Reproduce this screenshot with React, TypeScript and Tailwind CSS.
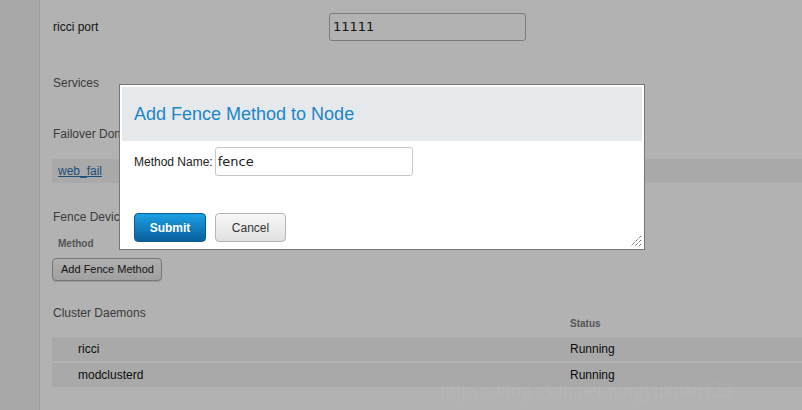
import React from "react";

const rows = [
  { name: "ricci", status: "Running" },
  { name: "modclusterd", status: "Running" },
];

function ResizeGrip() {
  return (
    <svg width="12" height="12" viewBox="0 0 12 12" className="absolute right-[2px] bottom-[2px]">
      <path d="M11 1 L1 11 M11 5 L5 11 M11 9 L9 11" stroke="#333" strokeWidth="1" strokeDasharray="1 1" fill="none" />
    </svg>
  );
}

export default function App() {
  return (
    <div className="relative w-[802px] h-[410px] overflow-hidden bg-white font-['Liberation_Sans',Arial,sans-serif] text-[12px] text-[#222]">
      {/* page under the modal */}
      <div className="flex h-full">
        <div className="w-[40px] shrink-0 bg-[#f1f1f1] border-r border-[#e2e2e2]" />
        <div className="flex-1 pl-[12px] pt-[13px]">
          <div className="flex items-center h-[28px]">
            <div className="w-[277px] pl-[1px]">ricci port</div>
            <div className="w-[197px] h-[28px] rounded-[3px] border border-[#b0b0b0] px-[3px] flex items-center font-['DejaVu_Sans',sans-serif] text-[13px] text-[#222]">
              11111
            </div>
          </div>

          <div className="mt-[34px] h-[16px] leading-[16px] pl-[1px] text-[#555]">Services</div>
          <div className="mt-[35px] h-[16px] leading-[16px] pl-[1px] text-[#555]">Failover Domains</div>

          <div className="mt-[17px] h-[24px] bg-[#f3f3f3] pl-[6px] flex items-center">
            <a className="underline text-[#2a72b0]">web_fail</a>
          </div>

          <div className="mt-[26px] h-[16px] leading-[16px] pl-[1px] text-[#555]">Fence Devices</div>
          <div className="mt-[13px] h-[12px] leading-[12px] pl-[6px] text-[10px] font-bold text-[#7a7a7a]">Method</div>
          <button className="mt-[8px] w-[110px] h-[23px] rounded-[4px] border border-[#a9a9a9] bg-gradient-to-b from-[#fbfbfb] to-[#e6e6e6] pl-[1px] text-[11px] text-[#222] shadow-[0_1px_1px_rgba(0,0,0,0.15)]">
            Add Fence Method
          </button>

          <div className="mt-[26px] h-[12px] leading-[12px] pl-[1px] text-[#555]">Cluster Daemons</div>
          <div className="grid grid-cols-[518px_1fr] h-[10px] leading-[10px] text-[10px] font-bold text-[#7a7a7a]">
            <div />
            <div>Status</div>
          </div>
          <div className="mt-[8px] flex flex-col gap-[2px]">
            {rows.map((r) => (
              <div key={r.name} className="grid grid-cols-[518px_1fr] h-[24px] items-center bg-[#f3f3f3] text-[#111]">
                <div className="pl-[26px]">{r.name}</div>
                <div>{r.status}</div>
              </div>
            ))}
          </div>
        </div>
      </div>

      {/* modal overlay */}
      <div className="absolute inset-0 bg-black/30" />

      {/* dialog */}
      <div className="absolute left-[119px] top-[84px] w-[526px] h-[166px] bg-white border border-[#777] p-[2px]">
        <div className="h-[54px] bg-[#e6e9ec] pl-[12px] flex items-center text-[18px] text-[#1a86c8]">
          Add Fence Method to Node
        </div>
        <div className="pl-[12px] pt-[6px]">
          <div className="flex items-center">
            <span className="text-[12px] text-[#222]">Method Name:</span>
            <div className="ml-[2px] w-[198px] h-[29px] rounded-[3px] border border-[#c8c8c8] px-[2px] flex items-center font-['DejaVu_Sans',sans-serif] text-[13px] text-[#222]">
              fence
            </div>
          </div>
          <div className="mt-[37px] flex gap-[9px]">
            <button className="w-[72px] h-[29px] rounded-[4px] border border-[#0b5b94] bg-gradient-to-b from-[#1ca1e6] to-[#0a5f9e] text-[12px] font-bold text-white">
              Submit
            </button>
            <button className="w-[71px] h-[29px] rounded-[4px] border border-[#b5b5b5] bg-gradient-to-b from-[#f7f7f7] to-[#e1e1e1] text-[12px] text-[#333]">
              Cancel
            </button>
          </div>
        </div>
        <ResizeGrip />
      </div>

      {/* watermark */}
      <div className="absolute left-[440px] top-[382px] font-['Liberation_Serif',serif] text-[20px] leading-[16px] text-white/[0.08] whitespace-nowrap">
        https://blog.csdn.net/ningyuxuan123
      </div>
    </div>
  );
}
